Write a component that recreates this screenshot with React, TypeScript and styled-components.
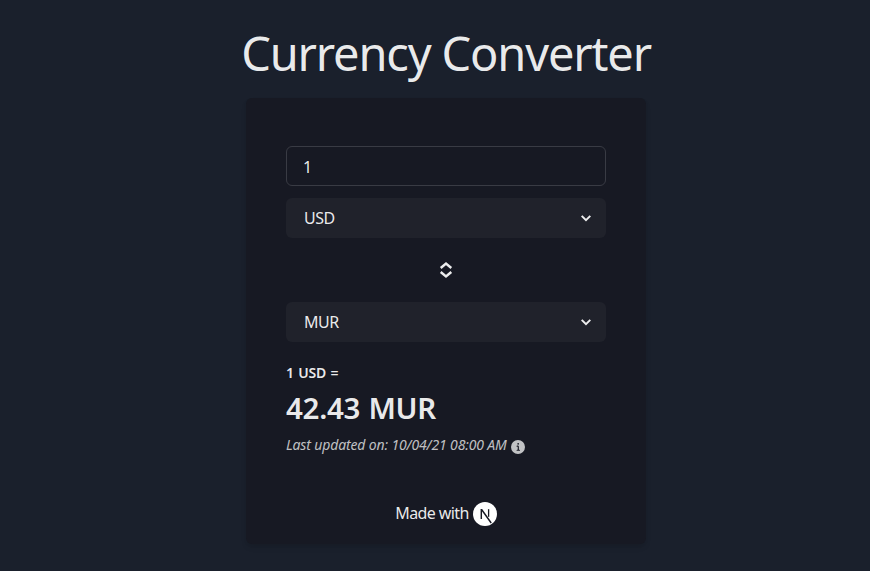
import React from "react";
import styled, { createGlobalStyle } from "styled-components";

const GlobalStyle = createGlobalStyle`
  *, *::before, *::after { box-sizing: border-box; }
  html, body { margin: 0; background: #1a202c; }
  body {
    overflow: hidden;
    color: rgba(255, 255, 255, 0.92);
    font-family: "Segoe UI", "Noto Sans", "Open Sans", sans-serif;
    font-size: 16px;
    line-height: 24px;
  }
`;

const Page = styled.main`
  width: 892px;
  height: 571px;
  padding-top: 17px;
  display: flex;
  flex-direction: column;
  align-items: center;
`;

const Title = styled.h1`
  margin: 0 0 9px;
  font-size: 47px;
  line-height: 72px;
  font-weight: 400;
  letter-spacing: -1.17px;
  white-space: nowrap;
`;

const Card = styled.section`
  width: 400px;
  height: 446px;
  padding: 48px 40px 0;
  display: flex;
  flex-direction: column;
  background: #171923;
  border-radius: 6px;
  box-shadow: 0 4px 6px -1px rgba(0, 0, 0, 0.1), 0 2px 4px -1px rgba(0, 0, 0, 0.06);
`;

const AmountInput = styled.input`
  width: 100%;
  height: 40px;
  margin: 0 0 12px;
  padding: 2px 16px 0;
  color: inherit;
  font: inherit;
  background: transparent;
  border: 1px solid #393b44;
  border-radius: 6px;
  outline: none;
`;

const SelectBox = styled.button`
  height: 40px;
  flex: none;
  padding: 0 12px 0 18px;
  display: flex;
  align-items: center;
  justify-content: space-between;
  color: inherit;
  font: inherit;
  letter-spacing: -0.45px;
  background: #20222b;
  border: 0;
  border-radius: 6px;
`;

const SwapButton = styled.button`
  height: 40px;
  width: 40px;
  flex: none;
  margin: 12px auto;
  padding: 0;
  display: flex;
  align-items: center;
  justify-content: center;
  color: inherit;
  background: none;
  border: 0;
`;

const Result = styled.div`
  margin-top: 20px;
  display: flex;
  flex-direction: column;
  white-space: nowrap;
`;

const ResultLabel = styled.span`
  font-size: 14px;
  line-height: 21px;
  font-weight: 600;
  letter-spacing: -0.2px;
  word-spacing: 1px;
`;

const ResultValue = styled.strong`
  margin-top: 7px;
  font-size: 29.5px;
  line-height: 36px;
  font-weight: 600;
  letter-spacing: -0.3px;
  word-spacing: 1px;
`;

const Updated = styled.div`
  margin-top: 8px;
  display: flex;
  align-items: center;
  gap: 4px;
  font-size: 14px;
  line-height: 21px;
  font-style: italic;
  letter-spacing: -0.14px;
  opacity: 0.8;

  svg { position: relative; top: 2px; }
`;

const Footer = styled.footer`
  margin-top: 46px;
  display: flex;
  justify-content: center;
  align-items: flex-start;
  gap: 4px;
  letter-spacing: -0.6px;
  white-space: nowrap;

  svg { margin-top: 1px; }
`;

const ChevronDown = () => (
  <svg width="16" height="16" viewBox="0 0 16 16" fill="none">
    <path d="M3.7 5.9 8 10.1l4.3-4.2" stroke="currentColor" strokeWidth="2" />
  </svg>
);

const SwapIcon = () => (
  <svg width="16" height="20" viewBox="0 0 16 20" fill="none" stroke="currentColor" strokeWidth="2.4">
    <path d="M2.7 8 8 3.5 13.3 8M2.7 12 8 16.5 13.3 12" />
  </svg>
);

const InfoIcon = () => (
  <svg width="14" height="14" viewBox="0 0 24 24" fill="currentColor">
    <path d="M12,0A12,12,0,1,0,24,12,12.013,12.013,0,0,0,12,0Zm.25,5a1.5,1.5,0,1,1-1.5,1.5A1.5,1.5,0,0,1,12.25,5ZM14.5,18.5h-4a1,1,0,0,1,0-2h.75a.25.25,0,0,0,.25-.25v-4.5a.25.25,0,0,0-.25-.25H10.5a1,1,0,0,1,0-2h1a2,2,0,0,1,2,2v4.75a.25.25,0,0,0,.25.25h.75a1,1,0,1,1,0,2Z" />
  </svg>
);

const NextLogo = () => (
  <svg width="24" height="24" viewBox="0 0 24 24" fill="none">
    <circle cx="12" cy="12" r="12" fill="#fff" />
    <path d="M8.3 17V7.8h.5L18.2 21" stroke="#171923" strokeWidth="1.45" />
    <path d="M15.6 7.2v7.6" stroke="#171923" strokeWidth="1.3" />
  </svg>
);

const CurrencySelect = ({ code }: { code: string }) => (
  <SelectBox type="button">
    <span>{code}</span>
    <ChevronDown />
  </SelectBox>
);

export default function App() {
  return (
    <>
      <GlobalStyle />
      <Page>
        <Title>Currency Converter</Title>
        <Card>
          <AmountInput aria-label="Amount" defaultValue="1" />
          <CurrencySelect code="USD" />
          <SwapButton type="button" aria-label="Swap currencies">
            <SwapIcon />
          </SwapButton>
          <CurrencySelect code="MUR" />
          <Result>
            <ResultLabel>1 USD =</ResultLabel>
            <ResultValue>42.43 MUR</ResultValue>
            <Updated>
              <span>Last updated on: 10/04/21 08:00 AM</span>
              <InfoIcon />
            </Updated>
          </Result>
          <Footer>
            <span>Made with</span>
            <NextLogo />
          </Footer>
        </Card>
      </Page>
    </>
  );
}
